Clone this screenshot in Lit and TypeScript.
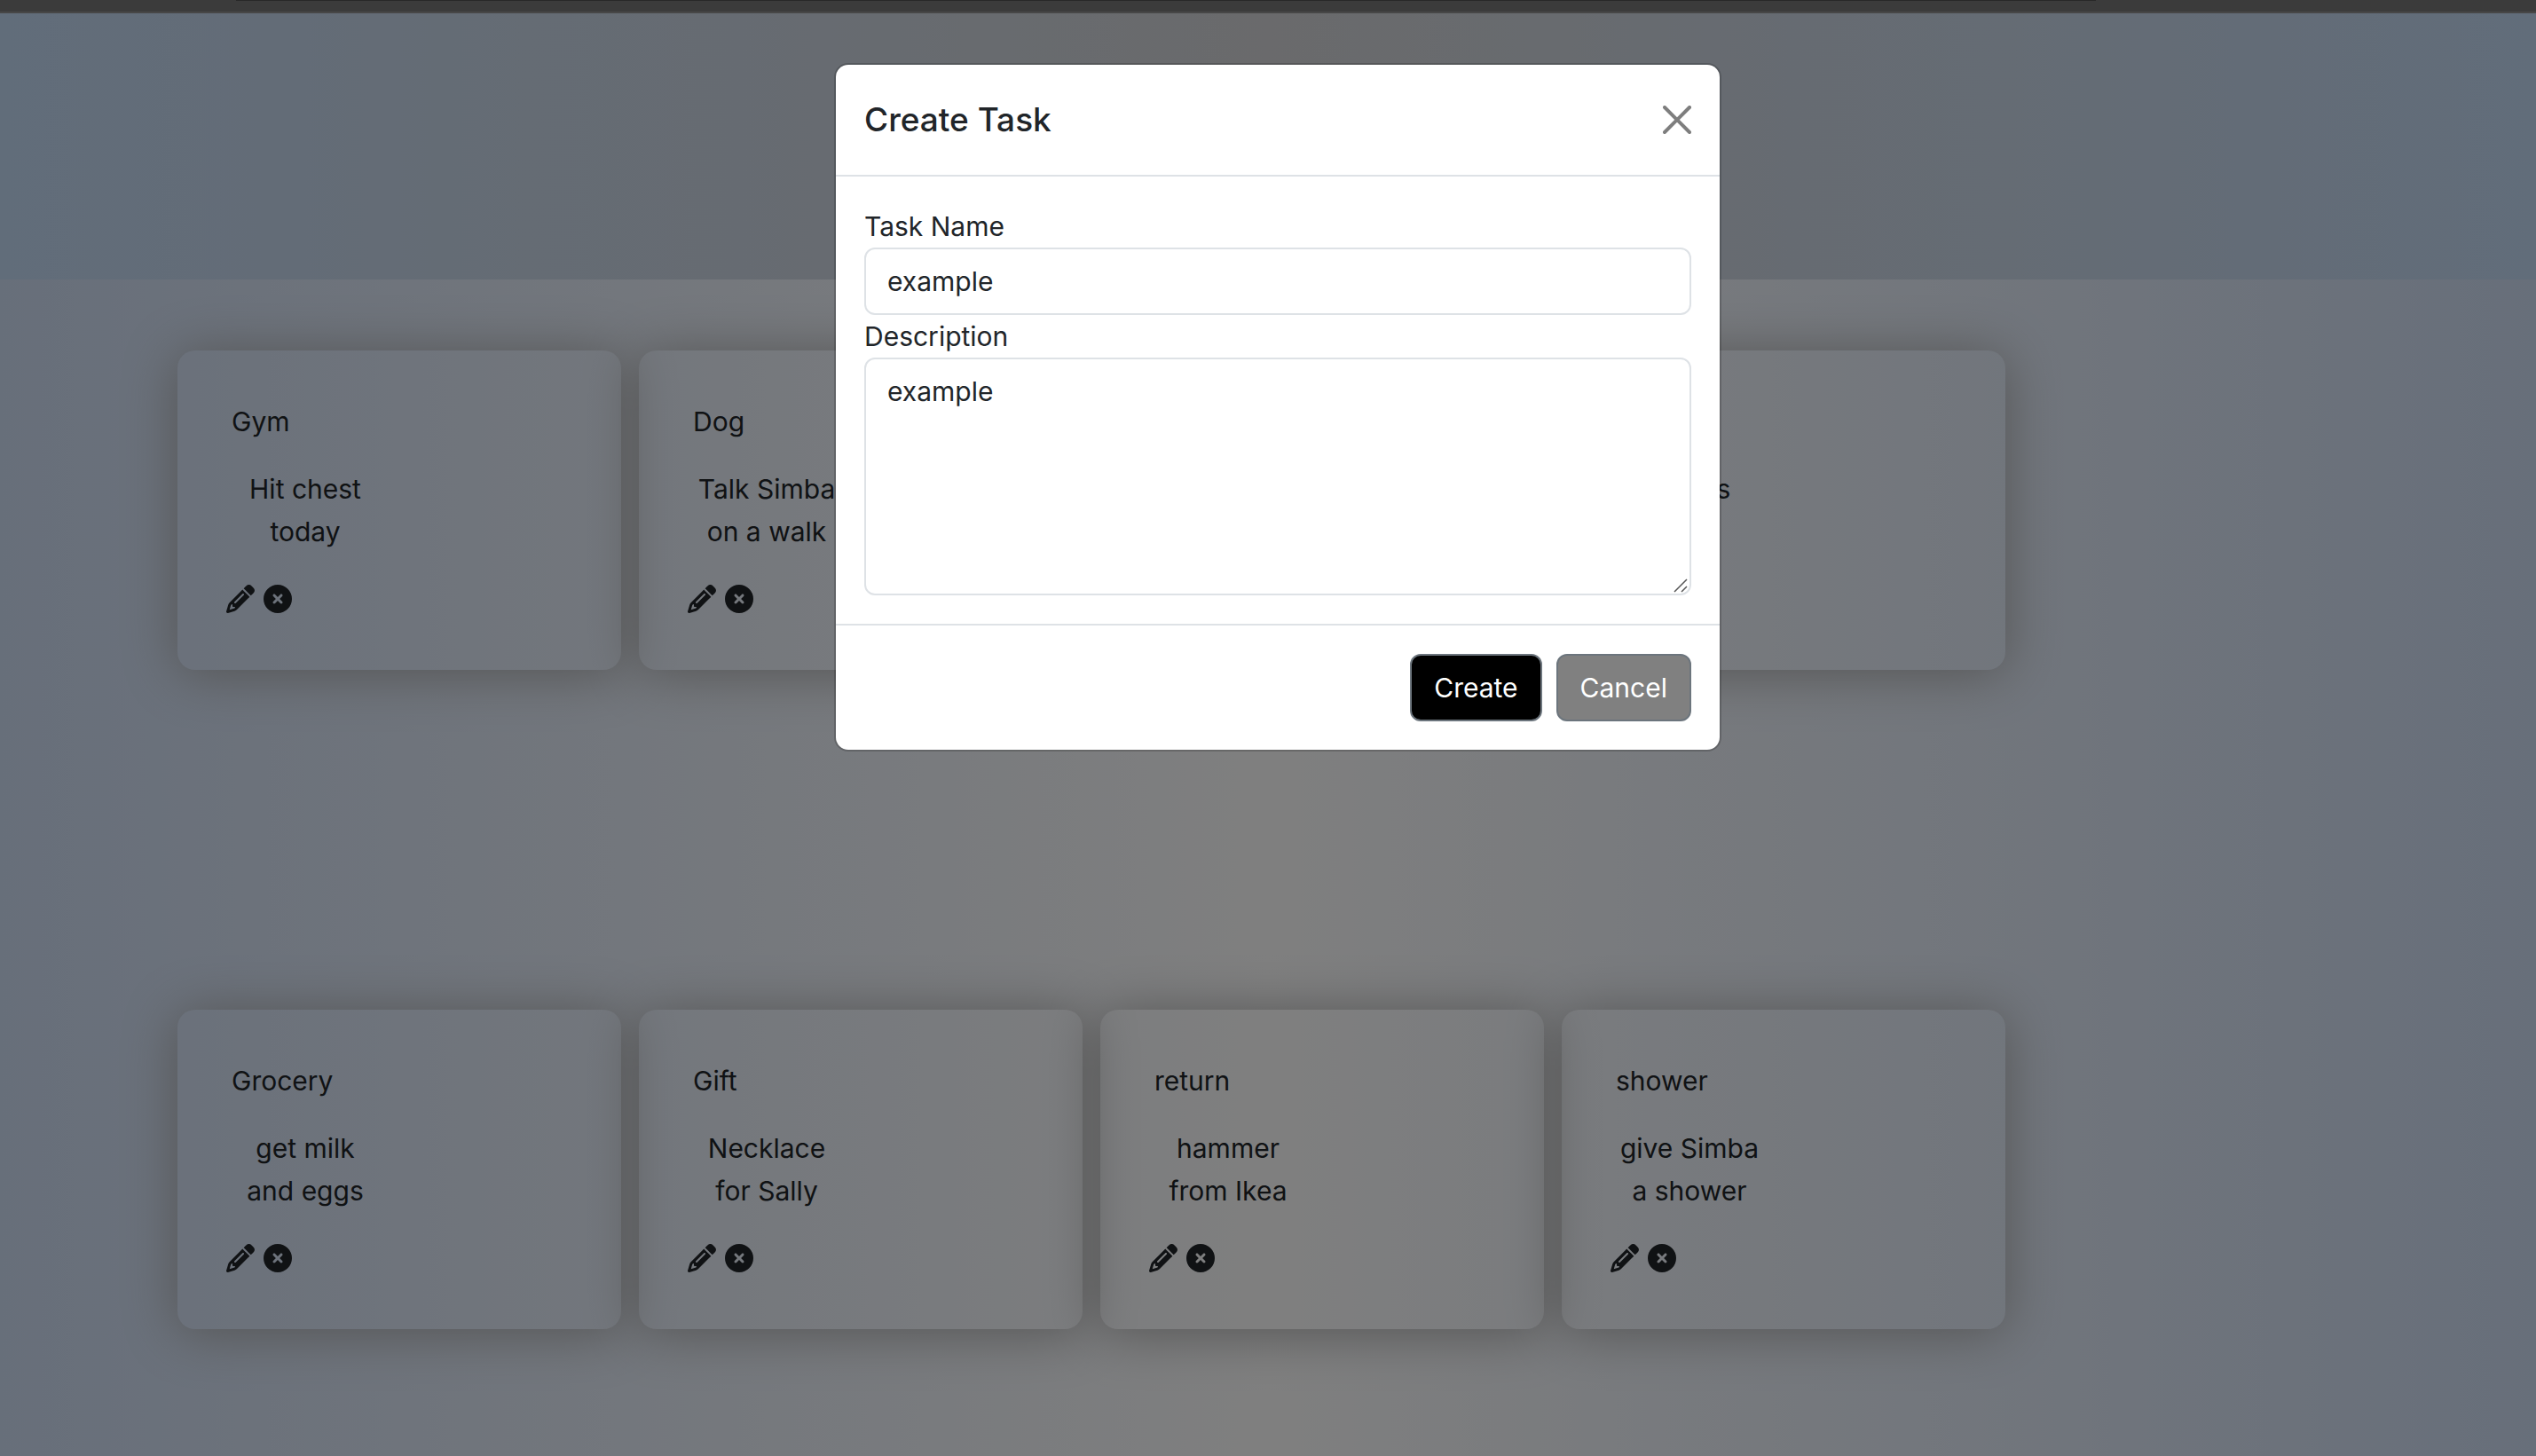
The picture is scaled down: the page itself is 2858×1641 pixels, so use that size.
import { LitElement, html, css, svg } from "lit";
import { customElement, property } from "lit/decorators.js";

interface Task {
  name: string;
  description: string;
}

const TASKS: Task[][] = [
  [
    { name: "Gym", description: "Hit chest today" },
    { name: "Dog", description: "Talk Simba on a walk" },
    { name: "Work", description: "Send email" },
    { name: "Home", description: "dishes" },
  ],
  [
    { name: "Grocery", description: "get milk and eggs" },
    { name: "Gift", description: "Necklace for Sally" },
    { name: "return", description: "hammer from Ikea" },
    { name: "shower", description: "give Simba a shower" },
  ],
];

const pencil = svg`<path d="M410.3 231l11.3-11.3-33.9-33.9-62.1-62.1L291.7 89.8l-11.3 11.3-22.6 22.6L58.6 322.9c-10.4 10.4-18 23.3-22.2 37.4L1 480.7c-2.5 8.4-.2 17.5 6.1 23.7s15.3 8.5 23.7 6.1l120.3-35.4c14.1-4.2 27-11.8 37.4-22.2L387.7 253.7 410.3 231zM160 399.4l-9.1 22.7c-4 3.1-8.5 5.4-13.3 6.9L59.4 452l23-78.1c1.4-4.9 3.8-9.4 6.9-13.3l22.7-9.1v32c0 8.8 7.2 16 16 16h32zM362.7 18.7L348.3 33.2 325.7 55.8 314.3 67.1l33.9 33.9 62.1 62.1 33.9 33.9 11.3-11.3 22.6-22.6 14.5-14.5c25-25 25-65.5 0-90.5L453.3 18.7c-25-25-65.5-25-90.5 0zm-47.4 168l-144 144c-6.2 6.2-16.4 6.2-22.6 0s-6.2-16.4 0-22.6l144-144c6.2-6.2 16.4-6.2 22.6 0s6.2 16.4 0 22.6z"/>`;
const circleX = svg`<path d="M256 512A256 256 0 1 0 256 0a256 256 0 1 0 0 512zM175 175c9.4-9.4 24.6-9.4 33.9 0l47 47 47-47c9.4-9.4 24.6-9.4 33.9 0s9.4 24.6 0 33.9l-47 47 47 47c9.4 9.4 9.4 24.6 0 33.9s-24.6 9.4-33.9 0l-47-47-47 47c-9.4 9.4-24.6 9.4-33.9 0s-9.4-24.6 0-33.9l47-47-47-47c-9.4-9.4-9.4-24.6 0-33.9z"/>`;

@customElement("task-card")
export class TaskCard extends LitElement {
  @property({ attribute: false }) task!: Task;

  static styles = css`
    :host {
      display: flex;
      flex-direction: column;
      align-items: flex-start;
      box-sizing: border-box;
      width: 500px;
      height: 360px;
      padding: 56px 55px;
      border-radius: 20px;
      box-shadow: 0 4px 60px #a9a9a9;
    }
    .name {
      margin: 0 0 28px 6px;
      font-size: 30px;
      font-weight: 400;
      line-height: 48px;
    }
    .description {
      box-sizing: border-box;
      width: 178px;
      margin: 0 0 36px;
      padding: 0 8px;
      text-align: center;
      line-height: 48px;
    }
    .actions {
      display: flex;
      gap: 10px;
    }
    .icon {
      width: 32px;
      height: 32px;
      padding: 0;
      border: 0;
      background: none;
      color: inherit;
    }
    .icon svg {
      display: block;
      width: 32px;
      height: 32px;
      fill: currentColor;
    }
  `;

  render() {
    return html`
      <h2 class="name">${this.task.name}</h2>
      <p class="description">${this.task.description}</p>
      <div class="actions">
        <button class="icon" type="button" aria-label="Edit"><svg viewBox="0 0 512 512">${pencil}</svg></button>
        <button class="icon" type="button" aria-label="Delete"><svg viewBox="0 0 512 512">${circleX}</svg></button>
      </div>
    `;
  }
}

@customElement("task-dialog")
export class TaskDialog extends LitElement {
  static styles = css`
    :host {
      display: block;
      width: 1000px;
    }
    .dialog {
      box-sizing: border-box;
      border: 2px solid rgba(0, 0, 0, 0.175);
      border-radius: 16px;
      background: #fff;
      background-clip: padding-box;
    }
    .header {
      display: flex;
      align-items: center;
      justify-content: space-between;
      padding: 32px;
      border-bottom: 2px solid #dee2e6;
    }
    .title {
      margin: 0;
      font-size: 37px;
      font-weight: 500;
      line-height: 60px;
    }
    .close {
      width: 32px;
      height: 32px;
      padding: 0;
      border: 0;
      background: none;
      opacity: 0.5;
    }
    .close svg {
      display: block;
    }
    .body {
      display: flex;
      flex-direction: column;
      padding: 32px;
    }
    .field {
      box-sizing: border-box;
      width: 100%;
      margin: 0;
      padding: 12px 24px;
      border: 2px solid #dee2e6;
      border-radius: 12px;
      background: #fff;
      color: #212529;
      font: inherit;
      line-height: 48px;
      outline: none;
    }
    .single {
      height: 76px;
    }
    .multi {
      display: block;
      height: 268px;
      resize: none;
    }
    .area {
      position: relative;
    }
    .grip {
      position: absolute;
      right: 4px;
      bottom: 3px;
      pointer-events: none;
    }
    .footer {
      display: flex;
      justify-content: flex-end;
      gap: 16px;
      padding: 32px;
      border-top: 2px solid #dee2e6;
    }
    .btn {
      padding: 12px 25px;
      border: 2px solid #6c757d;
      border-radius: 12px;
      color: #fff;
      font: inherit;
      line-height: 48px;
    }
    .create {
      background: #000;
    }
    .cancel {
      background: #808080;
    }
  `;

  render() {
    return html`
      <form class="dialog" role="dialog" aria-labelledby="title" @submit=${(e: Event) => e.preventDefault()}>
        <div class="header">
          <h1 class="title" id="title">Create Task</h1>
          <button class="close" type="button" aria-label="Close">
            <svg width="32" height="32" viewBox="0 0 16 16">
              <path d="M.293.293a1 1 0 0 1 1.414 0L8 6.586 14.293.293a1 1 0 1 1 1.414 1.414L9.414 8l6.293 6.293a1 1 0 0 1-1.414 1.414L8 9.414l-6.293 6.293a1 1 0 0 1-1.414-1.414L6.586 8 .293 1.707a1 1 0 0 1 0-1.414z" />
            </svg>
          </button>
        </div>
        <div class="body">
          <label for="name">Task Name</label>
          <input class="field single" id="name" type="text" .value=${"example"} />
          <label for="description">Description</label>
          <div class="area">
            <textarea class="field multi" id="description" .value=${"example"}></textarea>
            <svg class="grip" width="16" height="16" viewBox="0 0 16 16" stroke="#555" stroke-width="1.5">
              <path d="M1 15L15 1M9 15L15 9" />
            </svg>
          </div>
        </div>
        <div class="footer">
          <button class="btn create" type="submit">Create</button>
          <button class="btn cancel" type="button">Cancel</button>
        </div>
      </form>
    `;
  }
}

@customElement("app-root")
export class AppRoot extends LitElement {
  static styles = css`
    :host {
      display: block;
      position: relative;
      min-height: 100vh;
      overflow: hidden;
      color: #212529;
      font-family: Inter, "Liberation Sans", sans-serif;
      font-size: 30px;
      line-height: 48px;
    }
    .chrome {
      display: flex;
      height: 15px;
      box-sizing: border-box;
      padding: 0 496px 0 266px;
      border-bottom: 2px solid #474747;
      background: #3b3b3b;
    }
    .address {
      flex: 1;
      height: 1px;
      background: #282828;
    }
    .page {
      min-height: calc(100vh - 15px);
      background: linear-gradient(to right, #cfdef5, #ffffff 50%, #cfdef5);
    }
    .banner {
      height: 300px;
      background: linear-gradient(to right, #c3daf5, #d4d5d8 50%, #c3daf5);
    }
    .board {
      display: grid;
      gap: 383px;
      padding: 80px 200px;
    }
    .row {
      display: flex;
      gap: 20px;
    }
    .backdrop {
      position: absolute;
      inset: 15px 0 0;
      display: flex;
      align-items: flex-start;
      justify-content: center;
      padding: 56px 0 0 22px;
      background: rgba(0, 0, 0, 0.5);
    }
  `;

  render() {
    return html`
      <div class="chrome"><div class="address"></div></div>
      <main class="page">
        <header class="banner"></header>
        <section class="board">
          ${TASKS.map((row) => html`<div class="row">${row.map((task) => html`<task-card .task=${task}></task-card>`)}</div>`)}
        </section>
      </main>
      <div class="backdrop"><task-dialog></task-dialog></div>
    `;
  }
}
